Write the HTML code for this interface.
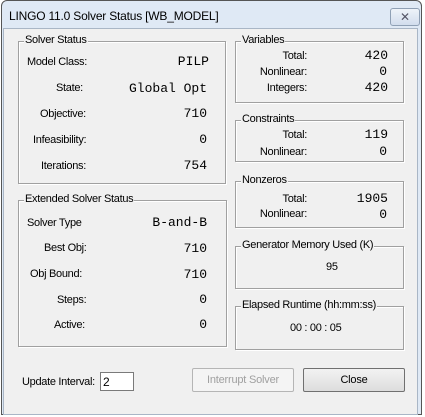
<!DOCTYPE html><html><head><style>
body{margin:0;width:425px;height:417px;background:#fff;position:relative;overflow:hidden;font-family:"Liberation Sans",sans-serif;font-size:11px;color:#000}
.win{position:absolute;left:1px;top:0;width:419px;height:413px;border:1px solid #555;border-radius:6px 6px 0 0;background:#dfe9f5}
.body{position:absolute;left:3px;top:28px;width:413px;height:385px;background:#f0f0f0;border:1px solid #a9b6c6}
.title{position:absolute;left:7px;top:8px;font-size:12px;color:#000;letter-spacing:-0.2px}
.xb{position:absolute;left:388px;top:7px;width:28px;height:16px;border:1px solid #8fa0b5;border-radius:3px;background:linear-gradient(#eef3f9,#d2dded);font-size:12px;text-align:center;line-height:16px;color:#556}
.g{position:absolute;border:1px solid #a0a0a0;box-shadow:inset 1px 1px 0 #fff,1px 1px 0 #fff}
.gl{position:absolute;top:-8px;left:5px;background:#f0f0f0;padding:0 1px;font-size:11px;letter-spacing:-0.3px;white-space:nowrap}
.t{position:absolute;white-space:nowrap;font-size:11px;letter-spacing:-0.3px}
.r{text-align:right}
.m{font-family:"Liberation Mono",monospace;font-size:13px;letter-spacing:0}
.btn{position:absolute;border:1px solid #707070;border-radius:2px;background:linear-gradient(#f2f2f2,#dddddd);text-align:center;font-size:11px;line-height:22px;letter-spacing:-0.2px}
</style></head><body>
<div class="win"><div class="title">LINGO 11.0 Solver Status [WB_MODEL]</div><div class="xb">✕</div></div>
<div class="body"></div>
<div class="g" style="left:18px;top:41px;width:206px;height:141px"><span class="gl">Solver Status</span></div>
<div class="g" style="left:18px;top:200px;width:207px;height:145px"><span class="gl">Extended Solver Status</span></div>
<div class="g" style="left:235px;top:41px;width:167px;height:60px"><span class="gl">Variables</span></div>
<div class="g" style="left:235px;top:120px;width:167px;height:40px"><span class="gl">Constraints</span></div>
<div class="g" style="left:235px;top:181px;width:167px;height:45px"><span class="gl">Nonzeros</span></div>
<div class="g" style="left:235px;top:246px;width:167px;height:41px"><span class="gl">Generator Memory Used (K)</span></div>
<div class="g" style="left:235px;top:306px;width:167px;height:42px"><span class="gl">Elapsed Runtime (hh:mm:ss)</span></div>

<div class="t" style="left:27px;top:56px">Model Class:</div><div class="t m r" style="right:216px;top:54px">PILP</div>
<div class="t" style="left:56px;top:82px">State:</div><div class="t m r" style="right:218px;top:81px">Global Opt</div>
<div class="t" style="left:40px;top:108px">Objective:</div><div class="t m r" style="right:218px;top:106px">710</div>
<div class="t" style="left:33px;top:134px">Infeasibility:</div><div class="t m r" style="right:218px;top:132px">0</div>
<div class="t" style="left:41px;top:160px">Iterations:</div><div class="t m r" style="right:218px;top:158px">754</div>

<div class="t" style="left:27px;top:217px">Solver Type</div><div class="t m r" style="right:218px;top:215px">B-and-B</div>
<div class="t" style="left:44px;top:242px">Best Obj:</div><div class="t m r" style="right:218px;top:241px">710</div>
<div class="t" style="left:30px;top:268px">Obj Bound:</div><div class="t m r" style="right:218px;top:267px">710</div>
<div class="t" style="left:57px;top:294px">Steps:</div><div class="t m r" style="right:218px;top:292px">0</div>
<div class="t" style="left:54px;top:319px">Active:</div><div class="t m r" style="right:218px;top:317px">0</div>

<div class="t r" style="right:118px;top:50px">Total:</div><div class="t m r" style="right:37px;top:48px">420</div>
<div class="t r" style="right:118px;top:66px">Nonlinear:</div><div class="t m r" style="right:38px;top:64px">0</div>
<div class="t r" style="right:118px;top:82px">Integers:</div><div class="t m r" style="right:37px;top:80px">420</div>
<div class="t r" style="right:118px;top:129px">Total:</div><div class="t m r" style="right:37px;top:127px">119</div>
<div class="t r" style="right:118px;top:146px">Nonlinear:</div><div class="t m r" style="right:38px;top:144px">0</div>
<div class="t r" style="right:118px;top:193px">Total:</div><div class="t m r" style="right:37px;top:191px">1905</div>
<div class="t r" style="right:118px;top:208px">Nonlinear:</div><div class="t m r" style="right:38px;top:207px">0</div>
<div class="t" style="left:326px;top:261px">95</div>
<div class="t" style="left:290px;top:322px">00 : 00 : 05</div>

<div class="t" style="left:22px;top:376px">Update Interval:</div>
<div style="position:absolute;left:100px;top:372px;width:34px;height:19px;background:#fff;border:1px solid #7a7a7a;font-size:12px;line-height:18px;padding-left:2px;box-sizing:border-box">2</div>
<div class="btn" style="left:192px;top:368px;width:100px;height:22px;color:#a0a0a0;border-color:#b5b5b5;background:#f4f4f4">Interrupt Solver</div>
<div class="btn" style="left:303px;top:368px;width:100px;height:22px">Close</div>
</body></html>
